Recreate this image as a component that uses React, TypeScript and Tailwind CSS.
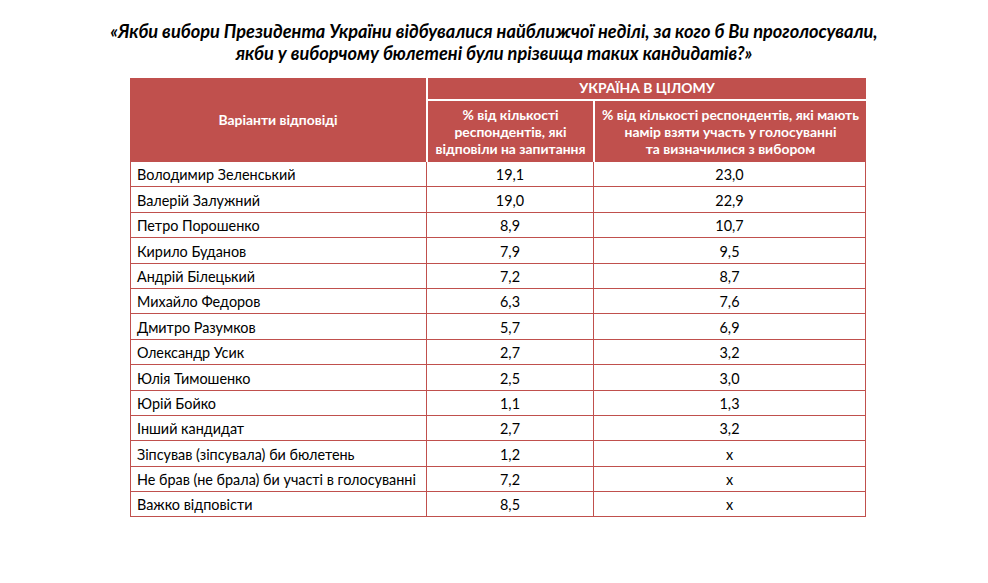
const rows: [string, string, string][] = [
  ["Володимир Зеленський", "19,1", "23,0"],
  ["Валерій Залужний", "19,0", "22,9"],
  ["Петро Порошенко", "8,9", "10,7"],
  ["Кирило Буданов", "7,9", "9,5"],
  ["Андрій Білецький", "7,2", "8,7"],
  ["Михайло Федоров", "6,3", "7,6"],
  ["Дмитро Разумков", "5,7", "6,9"],
  ["Олександр Усик", "2,7", "3,2"],
  ["Юлія Тимошенко", "2,5", "3,0"],
  ["Юрій Бойко", "1,1", "1,3"],
  ["Інший кандидат", "2,7", "3,2"],
  ["Зіпсував (зіпсувала) би бюлетень", "1,2", "x"],
  ["Не брав (не брала) би участі в голосуванні", "7,2", "x"],
  ["Важко відповісти", "8,5", "x"],
];

export default function App() {
  return (
    <div
      className="w-[988px] h-[583px] bg-white text-black"
      style={{ fontFamily: "Lato, 'Noto Sans', sans-serif" }}
    >
      <h1 className="pt-[20px] text-center text-[18.2px] font-bold italic leading-[22px]">
        «Якби вибори Президента України відбувалися найближчої неділі, за кого б Ви проголосували,
        <br />
        якби у виборчому бюлетені були прізвища таких кандидатів?»
      </h1>

      <div className="ml-[130px] mt-[14px] w-[736px] text-[14.4px]">
        {/* header */}
        <div className="flex h-[84px] gap-[2px] text-white font-bold text-[13.9px]">
          <div className="flex w-[296px] items-center justify-center bg-[#c0504d]">
            Варіанти відповіді
          </div>
          <div className="flex flex-1 flex-col gap-[2px]">
            <div className="flex h-[21px] items-center justify-center bg-[#c0504d]">
              УКРАЇНА В ЦІЛОМУ
            </div>
            <div className="flex flex-1 gap-[2px] leading-[17px]">
              <div className="flex w-[165px] items-center justify-center bg-[#c0504d] text-center">
                % від кількості
                <br />
                респондентів, які
                <br />
                відповіли на запитання
              </div>
              <div className="flex flex-1 items-center justify-center bg-[#c0504d] text-center">
                % від кількості респондентів, які мають
                <br />
                намір взяти участь у голосуванні
                <br />
                та визначилися з вибором
              </div>
            </div>
          </div>
        </div>

        {/* body */}
        <div className="border-x border-[#c0504d]">
          {rows.map(([name, a, b]) => (
            <div key={name} className="flex h-[25.4px] border-b border-[#c0504d]">
              <div className="flex w-[296px] items-center border-r border-[#c0504d] pl-[6px] pt-[2px]">
                {name}
              </div>
              <div className="flex w-[167px] items-center justify-center border-r border-[#c0504d] pt-[2px]">
                {a}
              </div>
              <div className="flex flex-1 items-center justify-center pt-[2px]">{b}</div>
            </div>
          ))}
        </div>
      </div>
    </div>
  );
}
